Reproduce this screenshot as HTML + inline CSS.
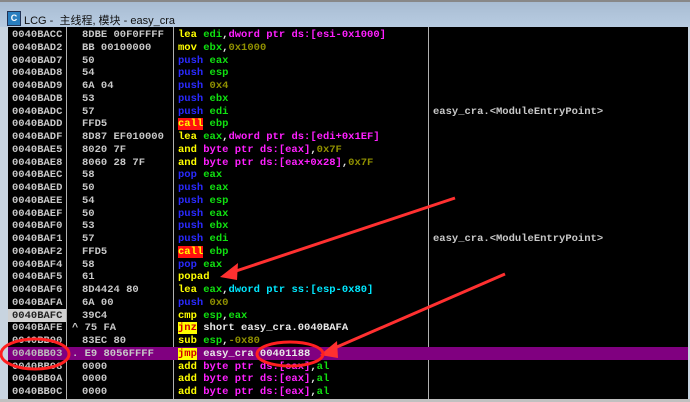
<!DOCTYPE html><html><head><meta charset="utf-8"><style>
body{margin:0;width:690px;height:402px;overflow:hidden;background:#c8d4e0;position:relative;font-family:"Liberation Mono",monospace}
#title{position:absolute;left:0;top:0;width:690px;height:27px;background:linear-gradient(#a8bcd2,#b8cce2);border-top:2px solid #888;box-sizing:border-box}
#title .ic{position:absolute;left:7px;top:9px;width:12px;height:13px;background:#2a7fc0;border:1px solid #235;color:#fff;font:bold 9px "Liberation Sans",sans-serif;text-align:center;line-height:13px}
#title .t{position:absolute;left:24px;top:10px;font:11px "Liberation Sans","Noto Sans CJK SC",sans-serif;color:#111}
#pane{position:absolute;left:8px;top:27px;width:680px;height:372px;background:#000;overflow:hidden}
#in{position:absolute;left:0;top:2px;width:680px;height:372px}
.vl{position:absolute;top:0;height:372px;width:1px;background:#b0b0b0}
.r{position:absolute;left:0;width:680px;height:13px;font-size:10.5px;font-weight:bold;line-height:13px;white-space:pre;color:#c8c8c8}
.r span{position:absolute}
.a{left:4px}.h{left:74px}.d{left:170px}.c{left:425px}
.Y{color:#ffff00}.G{color:#10e010}.M{color:#ff20ff}.B{color:#2a2aff}.O{color:#909000}.C{color:#00e8ff}.W{color:#e8e8e8}
.rb{background:#ff1010;color:#ffff00}.yb{background:#ffff00;color:#d00000}
#bot{position:absolute;left:0;top:399px;width:690px;height:3px;background:#c0c0c0}
</style></head><body>
<div id="title"><div class="ic">C</div><div class="t">LCG - &nbsp;主线程, 模块 - easy_cra</div></div>
<div id="pane">
<div class="vl" style="left:58px"></div><div class="vl" style="left:165px"></div><div class="vl" style="left:420px"></div>
<div id="in">
<div style="position:absolute;left:0;top:280px;width:58px;height:13px;background:#d0d0d0"></div>
<div style="position:absolute;left:0;top:318px;width:680px;height:13px;background:#800080"></div>
<div class="vl" style="left:58px;height:0"></div>
<div class="r" style="top:0px"><span class="a">0040BACC</span><span class="h">8DBE 00F0FFFF</span><span class="d"><b class="Y">lea</b> <b class="G">edi</b><b class="W">,</b><b class="M">dword ptr ds:[esi-0x1000]</b></span></div>
<div class="r" style="top:12.75px"><span class="a">0040BAD2</span><span class="h">BB 00100000</span><span class="d"><b class="Y">mov</b> <b class="G">ebx</b><b class="W">,</b><b class="O">0x1000</b></span></div>
<div class="r" style="top:25.5px"><span class="a">0040BAD7</span><span class="h">50</span><span class="d"><b class="B">push</b> <b class="G">eax</b></span></div>
<div class="r" style="top:38.25px"><span class="a">0040BAD8</span><span class="h">54</span><span class="d"><b class="B">push</b> <b class="G">esp</b></span></div>
<div class="r" style="top:51px"><span class="a">0040BAD9</span><span class="h">6A 04</span><span class="d"><b class="B">push</b> <b class="O">0x4</b></span></div>
<div class="r" style="top:63.75px"><span class="a">0040BADB</span><span class="h">53</span><span class="d"><b class="B">push</b> <b class="G">ebx</b></span></div>
<div class="r" style="top:76.5px"><span class="a">0040BADC</span><span class="h">57</span><span class="d"><b class="B">push</b> <b class="G">edi</b></span><span class="c">easy_cra.&lt;ModuleEntryPoint&gt;</span></div>
<div class="r" style="top:89.25px"><span class="a">0040BADD</span><span class="h">FFD5</span><span class="d"><b class="rb">call</b> <b class="G">ebp</b></span></div>
<div class="r" style="top:102px"><span class="a">0040BADF</span><span class="h">8D87 EF010000</span><span class="d"><b class="Y">lea</b> <b class="G">eax</b><b class="W">,</b><b class="M">dword ptr ds:[edi+0x1EF]</b></span></div>
<div class="r" style="top:114.75px"><span class="a">0040BAE5</span><span class="h">8020 7F</span><span class="d"><b class="Y">and</b> <b class="M">byte ptr ds:[eax]</b><b class="W">,</b><b class="O">0x7F</b></span></div>
<div class="r" style="top:127.5px"><span class="a">0040BAE8</span><span class="h">8060 28 7F</span><span class="d"><b class="Y">and</b> <b class="M">byte ptr ds:[eax+0x28]</b><b class="W">,</b><b class="O">0x7F</b></span></div>
<div class="r" style="top:140.25px"><span class="a">0040BAEC</span><span class="h">58</span><span class="d"><b class="B">pop</b> <b class="G">eax</b></span></div>
<div class="r" style="top:153px"><span class="a">0040BAED</span><span class="h">50</span><span class="d"><b class="B">push</b> <b class="G">eax</b></span></div>
<div class="r" style="top:165.75px"><span class="a">0040BAEE</span><span class="h">54</span><span class="d"><b class="B">push</b> <b class="G">esp</b></span></div>
<div class="r" style="top:178.5px"><span class="a">0040BAEF</span><span class="h">50</span><span class="d"><b class="B">push</b> <b class="G">eax</b></span></div>
<div class="r" style="top:191.25px"><span class="a">0040BAF0</span><span class="h">53</span><span class="d"><b class="B">push</b> <b class="G">ebx</b></span></div>
<div class="r" style="top:204px"><span class="a">0040BAF1</span><span class="h">57</span><span class="d"><b class="B">push</b> <b class="G">edi</b></span><span class="c">easy_cra.&lt;ModuleEntryPoint&gt;</span></div>
<div class="r" style="top:216.75px"><span class="a">0040BAF2</span><span class="h">FFD5</span><span class="d"><b class="rb">call</b> <b class="G">ebp</b></span></div>
<div class="r" style="top:229.5px"><span class="a">0040BAF4</span><span class="h">58</span><span class="d"><b class="B">pop</b> <b class="G">eax</b></span></div>
<div class="r" style="top:242.25px"><span class="a">0040BAF5</span><span class="h">61</span><span class="d"><b class="Y">popad</b></span></div>
<div class="r" style="top:255px"><span class="a">0040BAF6</span><span class="h">8D4424 80</span><span class="d"><b class="Y">lea</b> <b class="G">eax</b><b class="W">,</b><b class="C">dword ptr ss:[esp-0x80]</b></span></div>
<div class="r" style="top:267.75px"><span class="a">0040BAFA</span><span class="h">6A 00</span><span class="d"><b class="B">push</b> <b class="O">0x0</b></span></div>
<div class="r" style="top:280.5px"><span class="a" style="color:#222">0040BAFC</span><span class="h">39C4</span><span class="d"><b class="Y">cmp</b> <b class="G">esp</b><b class="W">,</b><b class="G">eax</b></span></div>
<div class="r" style="top:293.25px"><span class="a">0040BAFE</span><span class="h" style="left:64px">^ 75 FA</span><span class="d"><b class="yb">jnz</b> <b class="W">short easy_cra.0040BAFA</b></span></div>
<div class="r" style="top:306px"><span class="a">0040BB00</span><span class="h">83EC 80</span><span class="d"><b class="Y">sub</b> <b class="G">esp</b><b class="W">,</b><b class="O">-0x80</b></span></div>
<div class="r" style="top:318.75px"><span class="a" style="color:#bbb">0040BB03</span><span class="h" style="left:64px">. E9 8056FFFF</span><span class="d"><b class="yb">jmp</b> <b class="W">easy_cra.00401188</b></span></div>
<div class="r" style="top:331.5px"><span class="a">0040BB08</span><span class="h">0000</span><span class="d"><b class="Y">add</b> <b class="M">byte ptr ds:[eax]</b><b class="W">,</b><b class="G">al</b></span></div>
<div class="r" style="top:344.25px"><span class="a">0040BB0A</span><span class="h">0000</span><span class="d"><b class="Y">add</b> <b class="M">byte ptr ds:[eax]</b><b class="W">,</b><b class="G">al</b></span></div>
<div class="r" style="top:357px"><span class="a">0040BB0C</span><span class="h">0000</span><span class="d"><b class="Y">add</b> <b class="M">byte ptr ds:[eax]</b><b class="W">,</b><b class="G">al</b></span></div>
</div>
</div>
<div id="bot"></div>
<svg style="position:absolute;left:0;top:0" width="690" height="402">
<line x1="455" y1="198" x2="230" y2="273" stroke="#ff3030" stroke-width="3"/>
<polygon points="220,277 238,263 237,280" fill="#ff3030"/>
<line x1="505" y1="274" x2="330" y2="350" stroke="#ff3030" stroke-width="3"/>
<polygon points="320,355 337,341 338,358" fill="#ff3030"/>
<ellipse cx="35" cy="354" rx="34" ry="15" fill="none" stroke="#ff2020" stroke-width="3"/>
<ellipse cx="290" cy="354" rx="33" ry="12" fill="none" stroke="#ff2020" stroke-width="3"/>
</svg>
</body></html>
